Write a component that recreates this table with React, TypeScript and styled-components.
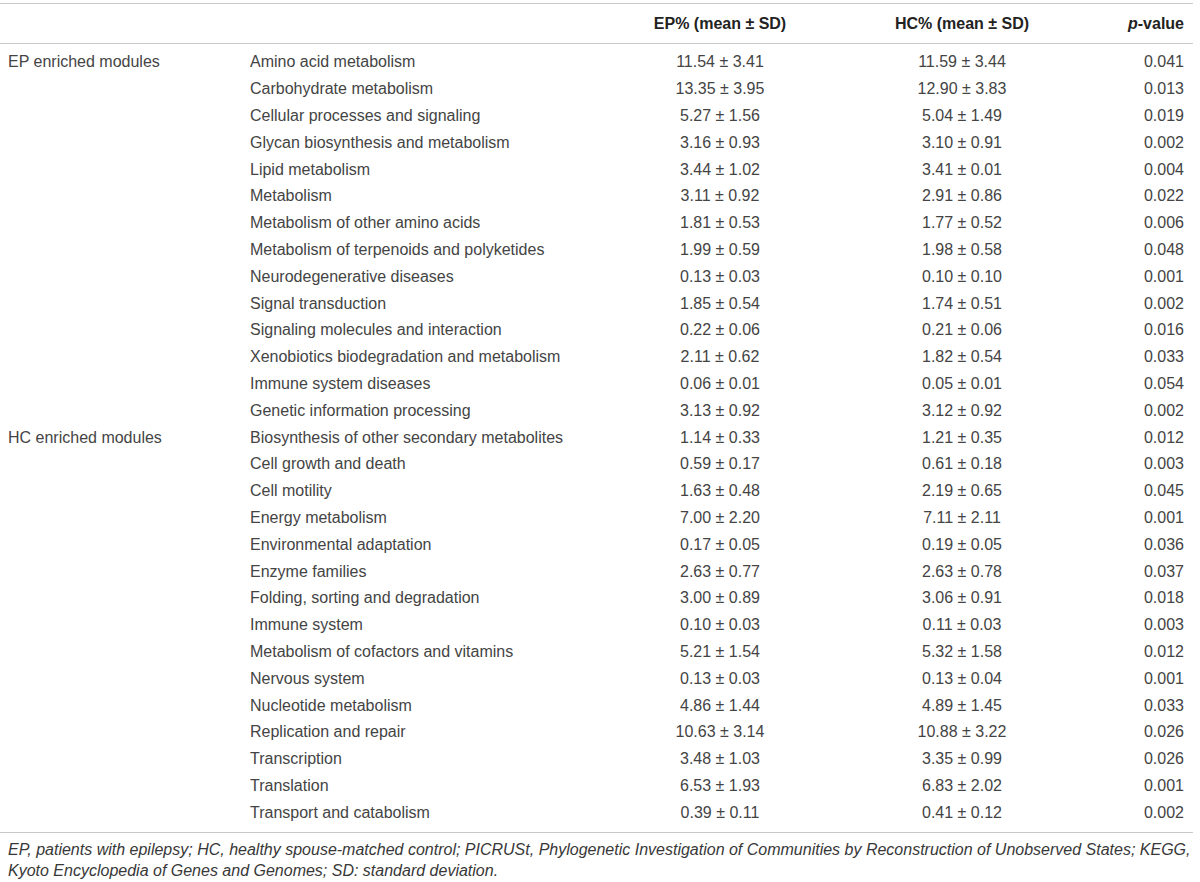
import React from "react";
import styled, { createGlobalStyle } from "styled-components";

const Global = createGlobalStyle`
  html, body { margin: 0; padding: 0; background: #ffffff; overflow: hidden; }
  body { font-family: "Liberation Sans", Arial, Helvetica, sans-serif; }
`;

const Page = styled.div`
  width: 1200px;
  height: 882px;
  overflow: hidden;
  background: #fff;
  padding-top: 3px;
  box-sizing: border-box;
`;

const Table = styled.div`
  width: 1193px;
  border-top: 1.5px solid #c9c9c9;
  border-bottom: 1.5px solid #c9c9c9;
`;

const cols = "242px 358px 240px 244px 109px";

const HeadRow = styled.div`
  display: grid;
  grid-template-columns: ${cols};
  height: 39px;
  align-items: center;
  border-bottom: 1.5px solid #c9c9c9;
  font-weight: bold;
  font-size: 16px;
  color: #222;
`;

const Body = styled.div`
  padding: 5px 0 6px;
`;

const Row = styled.div`
  display: grid;
  grid-template-columns: ${cols};
  height: 26.8px;
  align-items: center;
  font-size: 16px;
  color: #444;
`;

const Cell = styled.div<{ $align?: "left" | "center" | "right" }>`
  text-align: ${(p) => p.$align || "left"};
  padding: ${(p) => (p.$align === "right" ? "0 9px 0 0" : p.$align === "center" ? "0" : "0 0 0 8px")};
  white-space: nowrap;
`;

const Foot = styled.div`
  width: 1193px;
  padding: 6px 0 0 8px;
  box-sizing: border-box;
  font-style: italic;
  font-size: 16px;
  line-height: 21px;
  color: #383838;
`;

type R = [string, string, string, string, string];

const rows: R[] = [
  ["EP enriched modules", "Amino acid metabolism", "11.54 ± 3.41", "11.59 ± 3.44", "0.041"],
  ["", "Carbohydrate metabolism", "13.35 ± 3.95", "12.90 ± 3.83", "0.013"],
  ["", "Cellular processes and signaling", "5.27 ± 1.56", "5.04 ± 1.49", "0.019"],
  ["", "Glycan biosynthesis and metabolism", "3.16 ± 0.93", "3.10 ± 0.91", "0.002"],
  ["", "Lipid metabolism", "3.44 ± 1.02", "3.41 ± 0.01", "0.004"],
  ["", "Metabolism", "3.11 ± 0.92", "2.91 ± 0.86", "0.022"],
  ["", "Metabolism of other amino acids", "1.81 ± 0.53", "1.77 ± 0.52", "0.006"],
  ["", "Metabolism of terpenoids and polyketides", "1.99 ± 0.59", "1.98 ± 0.58", "0.048"],
  ["", "Neurodegenerative diseases", "0.13 ± 0.03", "0.10 ± 0.10", "0.001"],
  ["", "Signal transduction", "1.85 ± 0.54", "1.74 ± 0.51", "0.002"],
  ["", "Signaling molecules and interaction", "0.22 ± 0.06", "0.21 ± 0.06", "0.016"],
  ["", "Xenobiotics biodegradation and metabolism", "2.11 ± 0.62", "1.82 ± 0.54", "0.033"],
  ["", "Immune system diseases", "0.06 ± 0.01", "0.05 ± 0.01", "0.054"],
  ["", "Genetic information processing", "3.13 ± 0.92", "3.12 ± 0.92", "0.002"],
  ["HC enriched modules", "Biosynthesis of other secondary metabolites", "1.14 ± 0.33", "1.21 ± 0.35", "0.012"],
  ["", "Cell growth and death", "0.59 ± 0.17", "0.61 ± 0.18", "0.003"],
  ["", "Cell motility", "1.63 ± 0.48", "2.19 ± 0.65", "0.045"],
  ["", "Energy metabolism", "7.00 ± 2.20", "7.11 ± 2.11", "0.001"],
  ["", "Environmental adaptation", "0.17 ± 0.05", "0.19 ± 0.05", "0.036"],
  ["", "Enzyme families", "2.63 ± 0.77", "2.63 ± 0.78", "0.037"],
  ["", "Folding, sorting and degradation", "3.00 ± 0.89", "3.06 ± 0.91", "0.018"],
  ["", "Immune system", "0.10 ± 0.03", "0.11 ± 0.03", "0.003"],
  ["", "Metabolism of cofactors and vitamins", "5.21 ± 1.54", "5.32 ± 1.58", "0.012"],
  ["", "Nervous system", "0.13 ± 0.03", "0.13 ± 0.04", "0.001"],
  ["", "Nucleotide metabolism", "4.86 ± 1.44", "4.89 ± 1.45", "0.033"],
  ["", "Replication and repair", "10.63 ± 3.14", "10.88 ± 3.22", "0.026"],
  ["", "Transcription", "3.48 ± 1.03", "3.35 ± 0.99", "0.026"],
  ["", "Translation", "6.53 ± 1.93", "6.83 ± 2.02", "0.001"],
  ["", "Transport and catabolism", "0.39 ± 0.11", "0.41 ± 0.12", "0.002"],
];

export default function App() {
  return (
    <Page>
      <Global />
      <Table>
        <HeadRow>
          <Cell />
          <Cell />
          <Cell $align="center">EP% (mean ± SD)</Cell>
          <Cell $align="center">HC% (mean ± SD)</Cell>
          <Cell $align="right">
            <i>p</i>-value
          </Cell>
        </HeadRow>
        <Body>
          {rows.map((r, i) => (
            <Row key={i}>
              <Cell>{r[0]}</Cell>
              <Cell>{r[1]}</Cell>
              <Cell $align="center">{r[2]}</Cell>
              <Cell $align="center">{r[3]}</Cell>
              <Cell $align="right">{r[4]}</Cell>
            </Row>
          ))}
        </Body>
      </Table>
      <Foot>
        EP, patients with epilepsy; HC, healthy spouse-matched control; PICRUSt, Phylogenetic Investigation of Communities by Reconstruction of Unobserved States; KEGG,
        Kyoto Encyclopedia of Genes and Genomes; SD: standard deviation.
      </Foot>
    </Page>
  );
}
